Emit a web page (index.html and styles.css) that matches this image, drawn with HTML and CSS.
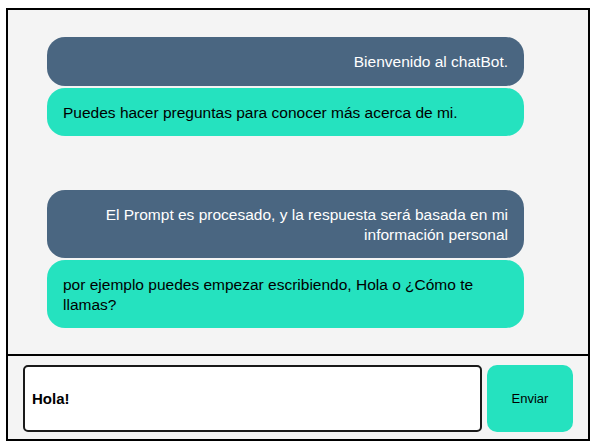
FILE: index.html
```html
<!DOCTYPE html>
<html lang="es">
<head>
<meta charset="utf-8">
<title>chatBot</title>
<link rel="stylesheet" href="styles.css">
</head>
<body>
<div class="app">
  <div class="chat">
    <div class="group">
      <div class="bubble bot">Bienvenido al chatBot.</div>
      <div class="bubble user">Puedes hacer preguntas para conocer más acerca de mi.</div>
    </div>
    <div class="group">
      <div class="bubble bot">El Prompt es procesado, y la respuesta será basada en mi información personal</div>
      <div class="bubble user">por ejemplo puedes empezar escribiendo, Hola o ¿Cómo te llamas?</div>
    </div>
  </div>
  <div class="composer">
    <div class="input">Hola!</div>
    <button class="send">Enviar</button>
  </div>
</div>
</body>
</html>
```

FILE: styles.css
```css
html, body {
  margin: 0;
  padding: 0;
  background: #ffffff;
}
body {
  padding: 8px 0 0 6px;
  font-family: "Liberation Sans", Arial, sans-serif;
}
.app {
  width: 580px;
  height: 429px;
  border: 2px solid #000;
  background: #f4f4f4;
  display: flex;
  flex-direction: column;
}
.chat {
  border-bottom: 2px solid #000;
  padding: 27px 64px 0 39px;
  box-sizing: border-box;
  height: 346px;
  display: flex;
  flex-direction: column;
  gap: 54px;
}
.group {
  display: flex;
  flex-direction: column;
  gap: 2px;
}
.bubble {
  border-radius: 18px;
  font-size: 15.5px;
  line-height: 19.5px;
  padding: 15px 16px 14px 16px;
}
.bot {
  background: #4a6681;
  color: #ffffff;
  text-align: right;
}
.user {
  background: #25e2bf;
  color: #000000;
}
.composer {
  flex: 1;
  display: flex;
  gap: 5px;
  padding: 9px 15px 7px 15px;
}
.input {
  flex: 1;
  border: 2px solid #1a1a1a;
  border-radius: 5px;
  background: #fff;
  display: flex;
  align-items: center;
  padding: 0 7px;
  font-weight: bold;
  font-size: 15px;
  color: #000;
}
.send {
  width: 86px;
  border: none;
  border-radius: 10px;
  background: #25e2bf;
  font-family: "Liberation Sans", Arial, sans-serif;
  font-size: 13px;
  color: #000;
  padding: 0;
}
```
